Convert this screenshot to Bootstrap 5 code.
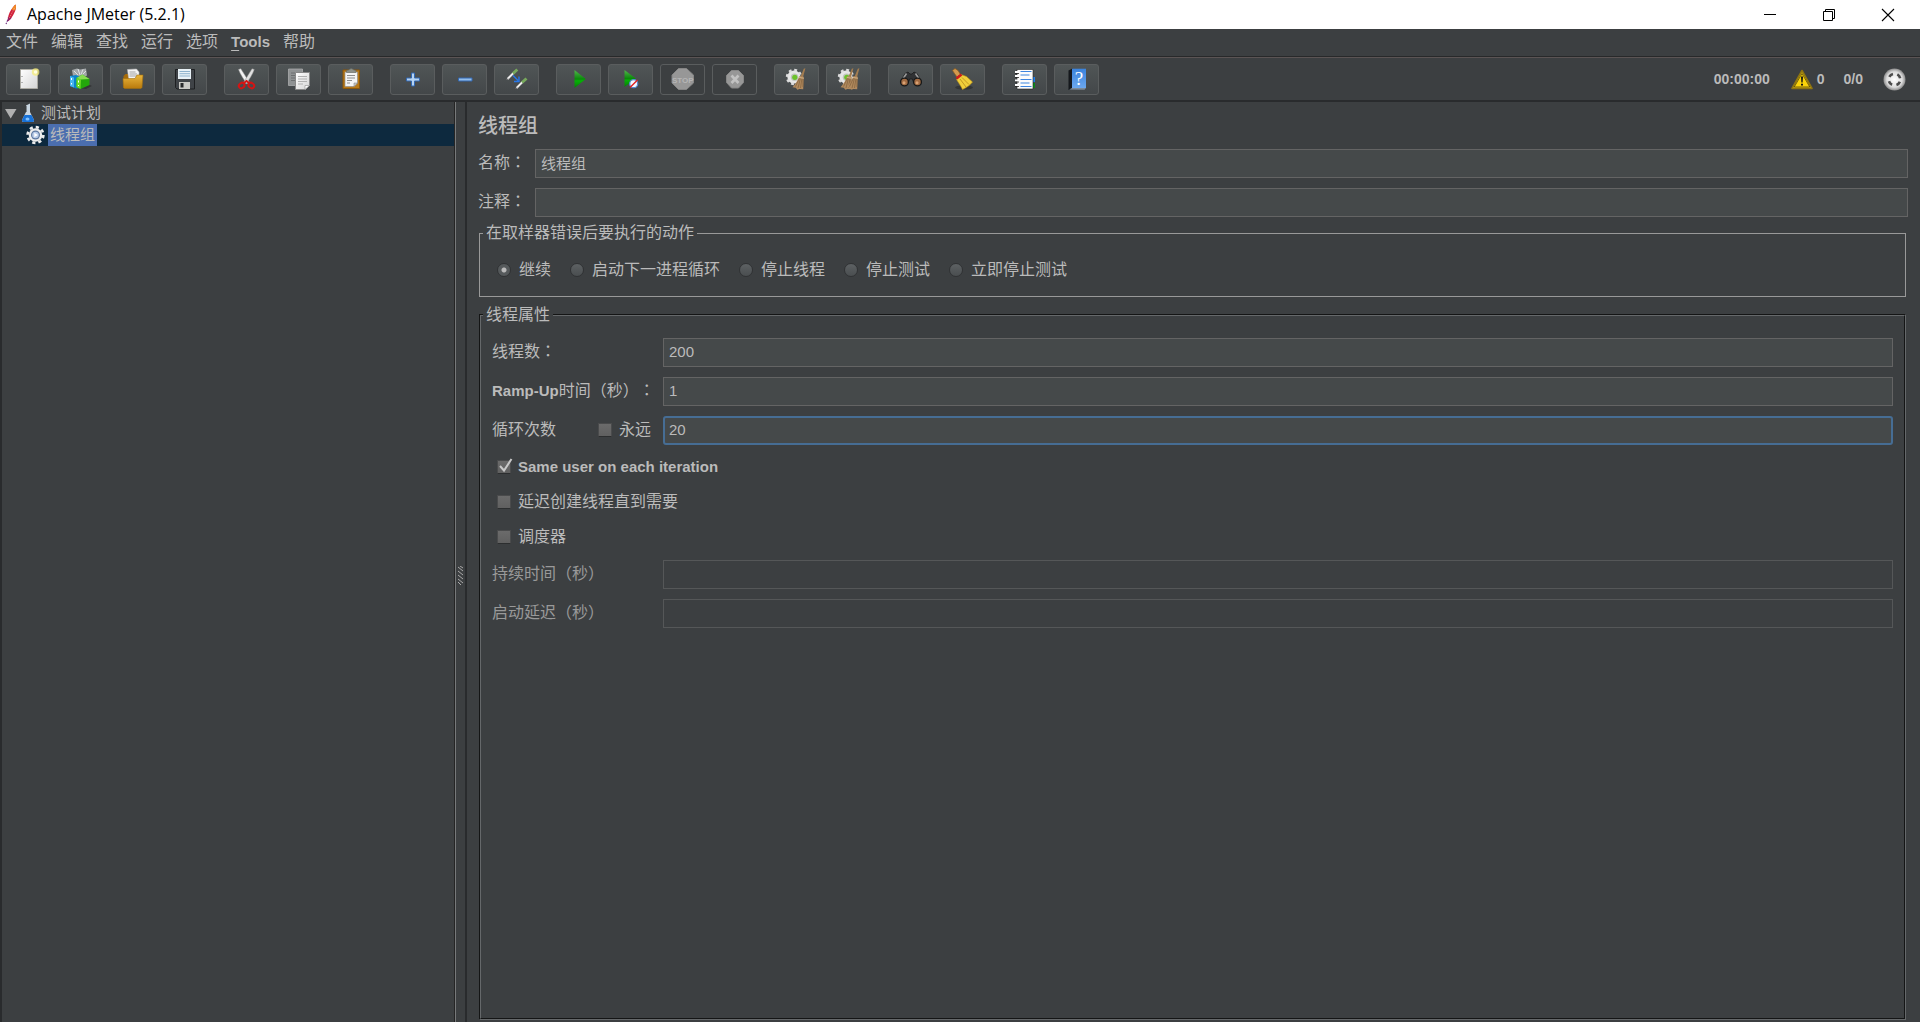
<!DOCTYPE html>
<html lang="zh-CN">
<head>
<meta charset="utf-8">
<meta name="viewport" content="width=device-width, initial-scale=1">
<title>Apache JMeter (5.2.1)</title>
<link rel="stylesheet" href="https://cdn.jsdelivr.net/npm/bootstrap@5.3.0/dist/css/bootstrap.min.css">
<style>
  body { background: #3c3f41; color: #bbb; font-family: "Liberation Sans", "Noto Sans CJK SC", sans-serif; font-size: 16px; line-height: 20px; text-spacing-trim: space-all; }
  .latin { font-size: 15px; font-weight: 700; }
  .colon { font-family: "Noto Sans CJK TC", sans-serif; line-height: 1; }
  .titlebar { background: #fff; color: #000; height: 29px; font: 16px/29px "Open Sans", "Noto Sans", sans-serif; padding: 0 25px 0 4px; }
  .titlebar .appname { margin-left: 9px; }
  .winbtns { gap: 45px; }
  .winbtn { border: 0; background: none; padding: 0; width: 14px; height: 14px; display: block; }
  .winbtn svg, .toolbtn svg, .node svg, .state svg { display: block; }
  .menubar { height: 27px; padding-bottom: 2px; }
  .menubar a { color: #bbb; text-decoration: none; padding: 0 7px 0 6px; }
  .menubar u { text-underline-offset: 3px; }
  .toolbar { border-top: 1px solid #28292a; box-shadow: inset 0 1px #5b5454; border-bottom: 2px solid #292b2d; height: 46px; padding: 7px 14px 0 6px; }
  .toolset { gap: 7px; margin-right: 17px; }
  .toolbtn { width: 45px; height: 31px; padding: 3px 10px; border: 1px solid #5a5d5e; border-radius: 3px; background: linear-gradient(#505556, #434749); }
  .toolbtn:disabled { background: #3c3f41; }
  .state { font: bold 14px/31px "Liberation Sans", sans-serif; height: 31px; }
  .warnicon { margin: 0 4px 0 21px; }
  .threads { margin: 0 20px 0 19px; }
  .workspace { min-height: 0; }
  .sidebar { width: 456px; border: solid #292b2d; border-width: 0 0 0 2px; border-right: 2px groove #77797a; padding: 0; }
  .node { height: 22px; font-size: 15px; line-height: 22px; }
  .arrow { margin-left: 3px; }
  .flask { margin: 0 6px 0 4px; }
  .cog { margin-left: 24px; }
  .node-picked { background: #0d293e; }
  .node-picked span { background: #4b6eaf; padding: 0 2px; margin-left: 3px; }
  .splitter { width: 9px; padding-top: 26px; }
  .editor { border-left: 2px solid #292b2d; padding: 12px 12px 2px 11px; min-width: 0; }
  .editor h1 { font-size: 20px; line-height: 24px; font-weight: 500; margin: 0 0 11px; }
  .formrow { margin-bottom: 10px; height: 29px; }
  .namelabel, .proplabel { padding-bottom: 2px; }
  .namelabel { width: 57px; }
  .proplabel { width: 171px; }
  .forever { margin-right: 12px; }
  .field { flex: 1; min-width: 0; height: 29px; border: 1px solid #646464; border-radius: 0; background: #45494a; color: #bbb; font-size: 15px; line-height: 20px; padding: 0 5px 2px; outline: 0; }
  .field:disabled { background: #3c3f41; border-color: #555758; }
  .field-active { border: 2px solid #466d94; border-radius: 3px; padding: 0 4px 2px; }
  .dimmed { color: #999; }
  fieldset.actions { border: 1px solid #999; padding: 17px 3px 16px; margin: -4px 2px 0 1px; }
  fieldset.props { border: 2px groove #65686a; padding: 13px 11px 0; margin: 8px 2px 0 1px; }
  .boxtitle { float: none; width: auto; font-size: 16px; line-height: 20px; padding: 0 3px; margin: 0; }
  .props .boxtitle { margin-left: -9px; }
  .radiorow { padding-left: 14px; gap: 19px; }
  .pick { gap: 7px; }
  .radiorow .pick { gap: 8px; }
  .pick input { appearance: none; margin: 0; flex: none; }
  .pick input[type=radio] { width: 14px; height: 14px; border-radius: 50%; border: 1px solid #303234; background: linear-gradient(#5d6163, #4a4e50); }
  .pick input[type=radio]:checked { background: radial-gradient(circle, #bbb 0 2px, #55595b 3px); }
  .pick input[type=checkbox] { width: 14px; height: 14px; border: 1px solid #4a4b4c; border-bottom-color: #2c2e2f; background: linear-gradient(#6b6b6b, #606060); }
  .checks { padding: 0 0 6px 5px; }
  .checkrow { height: 35px; }
  .tick { position: relative; }
  .tick svg { position: absolute; left: 0; top: 1px; pointer-events: none; }
</style>
<script src="https://cdn.jsdelivr.net/npm/bootstrap@5.3.0/dist/js/bootstrap.bundle.min.js"></script>
</head>
<body class="d-flex flex-column vh-100 overflow-hidden">
<svg width="0" height="0" class="position-absolute" aria-hidden="true">
  <defs>
    <linearGradient id="gPaper" x2="1" y2="1"><stop stop-color="#fff"/><stop offset="1" stop-color="#d4d4d4"/></linearGradient>
    <linearGradient id="gGold" x2="0" y2="1"><stop stop-color="#e9b53c"/><stop offset="1" stop-color="#b97a0c"/></linearGradient>
    <linearGradient id="gGreen" x2="0" y2="1"><stop stop-color="#52b64c"/><stop offset=".5" stop-color="#0b8a0b"/><stop offset=".6" stop-color="#06b206"/><stop offset="1" stop-color="#087c08"/></linearGradient>
    <radialGradient id="gBall"><stop stop-color="#fff"/><stop offset=".7" stop-color="#ddd"/><stop offset="1" stop-color="#8c8c8c"/></radialGradient>
    <linearGradient id="gBlue" x2="0" y2="1"><stop stop-color="#3b83dc"/><stop offset="1" stop-color="#6ba7ee"/></linearGradient>
    <g id="gear">
      <circle cx="9" cy="9" r="6.6" fill="#e6e6e6"/>
      <circle cx="9" cy="9" r="7" fill="none" stroke="#dcdcdc" stroke-width="2.4" stroke-dasharray="2.8 2.7"/>
      <circle cx="9.6" cy="9.3" r="3.8" fill="#bfc4bb"/><circle cx="9.8" cy="9.3" r="2.6" fill="#6cc22b"/>
    </g>
    <g id="besom">
      <path d="M18.800 .8l1.600-.5-2.400 9-2.400-.8z" fill="#a27c50"/>
      <path d="M14.500 8l4.300 .8-.6 12.500-3.800-.3-2 .8-1.600-2-3.300-.6C10.500 16 12.800 12.500 14.500 8z" fill="#b1895d"/>
      <path d="M14.500 10l-4 8.500M15.500 10l-2.500 10M17 10l-1.500 10M18 10v9" stroke="#80603c" stroke-width=".7" fill="none"/>
      <path d="M13.800 9.500l5 .8" stroke="#d8b98c" stroke-width=".9"/>
    </g>
  </defs>
</svg>

<header class="titlebar d-flex align-items-center">
  <svg width="14" height="22" viewBox="0 0 14 22" aria-hidden="true">
    <path d="M11.500 .5c1 2 .5 5-1.500 9-1.500 3-3.500 5.500-6 7.500C3.500 13 5 9 7 6c1.400-2.200 3-4.200 4.500-5.500z" fill="#d0213c"/>
    <path d="M11.500 .5c1 2 .5 3.800-.5 6L7.500 5.400C9 3 10.400 1.500 11.500 .5z" fill="#f08a24"/>
    <path d="M3.800 13.200l4.100.2C6.800 15 5.500 16.200 4 17.200z" fill="#9c2261"/>
    <path d="M10.500 4L5 14.500" stroke="#f6b0a0" stroke-width=".7" stroke-dasharray="1 1"/>
    <path d="M4 15.500L2 20" stroke="#6c2a7a" stroke-width="1.100" stroke-dasharray="2.500 1"/>
  </svg>
  <span class="appname">Apache JMeter (5.2.1)</span>
  <div class="winbtns d-flex ms-auto">
    <button class="winbtn" type="button" aria-label="最小化"><svg width="14" height="14"><path d="M1 6.500h12" stroke="#000"/></svg></button>
    <button class="winbtn" type="button" aria-label="还原"><svg width="14" height="14"><path d="M1.500 3.500h9v9h-9zM3.500 3.500v-2h9v9h-2" fill="none" stroke="#000"/></svg></button>
    <button class="winbtn" type="button" aria-label="关闭"><svg width="14" height="14"><path d="M1 1l12 12M13 1L1 13" stroke="#000" stroke-width="1.100"/></svg></button>
  </div>
</header>

<nav class="menubar d-flex align-items-center">
  <a href="#">文件</a><a href="#">编辑</a><a href="#">查找</a><a href="#">运行</a><a href="#">选项</a><a href="#" class="latin"><u>T</u>ools</a><a href="#">帮助</a>
</nav>

<div class="toolbar d-flex align-items-start" role="toolbar">
  <div class="toolset d-flex">
    <button class="toolbtn" type="button" aria-label="新建"><svg width="23" height="23"><path d="M3.500 1.500h17v19h-17z" fill="url(#gPaper)" stroke="#aaa9a2"/><path d="M5 8v1M5 14v1" stroke="#777"/><circle cx="18.600" cy="4" r="3.800" fill="#f5ec7a" opacity=".75"/><circle cx="18.600" cy="4" r="1.800" fill="#fffde0"/></svg></button>
    <button class="toolbtn" type="button" aria-label="模板"><svg width="23" height="23"><path d="M3 2l5-1.500 3 1 6-1 1 7-6 3-8-2z" fill="#a4a8aa"/><path d="M5 3l4 4M9 1l2 6M14 1.500l-2 5M17 3l-4 4" stroke="#dfe2e4"/><path d="M1 8l6-1 5 2v11l-5 .5-6-2.500z" fill="#0b83cc"/><path d="M1 8l4 1.500v10L1 18z" fill="#45b4ee"/><path d="M2.500 10v2M2.500 15v1.500" stroke="#fff"/><path d="M19 16l4 2-6 3-7-1z" fill="#222" opacity=".5"/><path d="M7.500 10l6-3.500 7 4.500v6l-9 4-4-2z" fill="#23a70b"/><path d="M7.500 10l4.500 1.500-.5 9.500-4-2z" fill="#6bdc24"/><path d="M12 11.500l8.500-.5-7-4.500-6 3.500z" fill="#87dd52"/><path d="M9.500 12.500v2M9.500 17v1" stroke="#fff"/></svg></button>
    <button class="toolbtn" type="button" aria-label="打开"><svg width="23" height="23"><path d="M2.500 8l2-2h5l1.500 2h10v12h-18.500z" fill="#a66b0a"/><path d="M6.500 1.500l9-.5 2.500 3v9h-10z" fill="#f4f4f4" stroke="#bbb" stroke-width=".6"/><path d="M8.500 4h6M8.500 6h7.500M8.500 8h7.500" stroke="#999" stroke-width=".9"/><path d="M2 10.500h12l2-3.500h6l-1 12.500-1 1H3.500l-1-1z" fill="url(#gGold)" stroke="#a2700f" stroke-width=".6"/></svg></button>
    <button class="toolbtn" type="button" aria-label="保存"><svg width="23" height="23"><path d="M2.500 1.500h19v19.500H4L2.500 19.500z" fill="#3f4347" stroke="#1e2022"/><path d="M5 1h13v10H5z" fill="#e8f1f6"/><path d="M6.500 3.500h10.500M6.500 5.700h10.500M6.500 8h10.500" stroke="#8eb2cd"/><path d="M6 14h11v7H6z" fill="#c9c9c5"/><path d="M7.500 15h3v4.500h-3z" fill="#27292a"/></svg></button>
  </div>
  <div class="toolset d-flex">
    <button class="toolbtn" type="button" aria-label="剪切"><svg width="23" height="23"><path d="M3.500 1.500l2.300-.8L14.300 14.200l-2.600 1.500C8.500 11 5.500 6.500 3.500 1.500z" fill="#f2f2f2" stroke="#9a9a9a" stroke-width=".5"/><path d="M19.300 1.500L17 .7 8.700 14.200l2.600 1.500C14.500 11 17.500 6.500 19.300 1.500z" fill="#e0e0e0" stroke="#8c8c8c" stroke-width=".5"/><ellipse cx="6.700" cy="17.500" rx="3" ry="2.500" transform="rotate(-35 6.700 17.500)" fill="none" stroke="#d41414" stroke-width="2"/><ellipse cx="16.300" cy="17.500" rx="3" ry="2.500" transform="rotate(35 16.300 17.500)" fill="none" stroke="#d41414" stroke-width="2"/><path d="M8.500 15.300l3-2.300 3 2.300" fill="none" stroke="#d41414" stroke-width="2"/></svg></button>
    <button class="toolbtn" type="button" aria-label="复制"><svg width="23" height="23"><path d="M1.500 1h14v16.500h-14z" fill="#8f9293" stroke="#a9abac" stroke-width=".8"/><path d="M4 5h9M4 7.500h5M4 10h5M4 12.500h5" stroke="#6c6f70"/><path d="M8.500 4.500h14v13l-4 4h-10z" fill="url(#gPaper)" stroke="#888"/><path d="M11 8.500h9M11 11h9M11 13.500h9M11 16h5" stroke="#b0b0b0"/><path d="M18 21.500v-4h4.500z" fill="#fff" stroke="#999" stroke-width=".7"/></svg></button>
    <button class="toolbtn" type="button" aria-label="粘贴"><svg width="23" height="23"><path d="M4 2h16.500v18.500H4z" fill="#b87918" stroke="#8b570b"/><path d="M6 4h12.500v11l-3.500 3.500H6z" fill="#f3f3f3" stroke="#888" stroke-width=".6"/><path d="M8 7.500h8M8 10h8M8 12.500h5M8 15h3" stroke="#8c8c8c"/><path d="M15 18.500V15h3.500z" fill="#ccc" stroke="#777" stroke-width=".5"/><path d="M7.500 4.500v-2l2-.5q2.700-3 5.500 0l2 .5v2z" fill="#8d9089" stroke="#666961" stroke-width=".6"/></svg></button>
  </div>
  <div class="toolset d-flex">
    <button class="toolbtn" type="button" aria-label="全部展开"><svg width="23" height="23"><path d="M10.500 5h3v5h5v3h-5v5h-3v-5h-5v-3h5z" fill="#b5d3f3" stroke="#3368b2"/></svg></button>
    <button class="toolbtn" type="button" aria-label="全部折叠"><svg width="23" height="23"><path d="M5.500 10h13.500v3H5.500z" fill="#93bdea" stroke="#3368b2"/></svg></button>
    <button class="toolbtn" type="button" aria-label="切换"><svg width="23" height="23"><path d="M2.500 11l6-6M11.500 20l6-6" stroke="#eee" stroke-width="2"/><path d="M8 5.500L12.300 1.500M17 14.500l4.500-4" stroke="#78a95c" stroke-width="3"/><path d="M1.500 12l1.500-1.500M10.500 21l1.500-1.500" stroke="#777"/><path d="M8 7.500l5 5M14 8.500v5H9" fill="none" stroke="#2877e8" stroke-width="1.400"/></svg></button>
  </div>
  <div class="toolset d-flex">
    <button class="toolbtn" type="button" aria-label="启动"><svg width="23" height="23"><path d="M7.500 2l11.300 9L7.500 20z" fill="url(#gGreen)"/></svg></button>
    <button class="toolbtn" type="button" aria-label="不停顿开始"><svg width="23" height="23"><path d="M5.500 2l11.300 8.500L5.500 19z" fill="url(#gGreen)"/><circle cx="14.700" cy="15.700" r="4" fill="#f4f8ff" stroke="#568bd0" stroke-width="1.300"/><path d="M11 19.500l7.500-7.500" stroke="#df2222" stroke-width="1.400"/></svg></button>
    <button class="toolbtn" type="button" aria-label="停止" disabled><svg width="23" height="23"><path d="M7.500 .5h8L22.500 7v8l-7 6.500h-8L1 15V7z" fill="#979797" stroke="#858585"/><text x="11.700" y="14.500" text-anchor="middle" font-family="Liberation Sans, sans-serif" font-size="8" font-weight="700" fill="#b5b5b5">STOP</text></svg></button>
    <button class="toolbtn" type="button" aria-label="关闭线程" disabled><svg width="23" height="23"><path d="M8.500 2.500h7l5 5v7l-5 5.500h-7l-5-5.500v-7z" fill="#979797" stroke="#868686"/><path d="M8.500 7.500l7 7.500M15.500 7.500l-7 7.500" stroke="#c2c2c2" stroke-width="2.600"/></svg></button>
  </div>
  <div class="toolset d-flex">
    <button class="toolbtn" type="button" aria-label="清除"><svg width="23" height="23"><use href="#gear"/><use href="#besom"/></svg></button>
    <button class="toolbtn" type="button" aria-label="清除全部"><svg width="23" height="23"><use href="#gear"/><use href="#besom" x="-4"/><use href="#besom" x="2"/></svg></button>
  </div>
  <div class="toolset d-flex">
    <button class="toolbtn" type="button" aria-label="查找"><svg width="23" height="23"><path d="M6 5.500l3-1.500 2 2h2l2-2 3 1.500 4.500 8-3.500 3-5-3-.5-2.500h-3L10 13.500l-5 3-3.500-3z" fill="#303234" stroke="#111" stroke-width=".6"/><path d="M7.500 5.500l-4 6M16.500 5.500l4 6" stroke="#999" stroke-width="1.600"/><circle cx="5.500" cy="14" r="3.900" fill="#a06a42" stroke="#17191a" stroke-width="1.400"/><circle cx="18.500" cy="14" r="3.900" fill="#a06a42" stroke="#17191a" stroke-width="1.400"/><circle cx="5" cy="14.700" r="1.500" fill="#d9a274"/><circle cx="18" cy="14.700" r="1.500" fill="#d9a274"/></svg></button>
    <button class="toolbtn" type="button" aria-label="重置查找"><svg width="23" height="23"><ellipse cx="13" cy="19.500" rx="9" ry="2" fill="#222" opacity=".5"/><path d="M1.500 2.500l2.500-2 3 2 2.500 4L6 9 3.500 5.500z" fill="#d29a4e" stroke="#8d5c1d" stroke-width=".7"/><path d="M10 6.500l5.500 2L21.500 14c-2.500 3.500-6 5.500-10 7.500C10 18 7.500 15 5.500 11.500z" fill="#f0cf3b" stroke="#b98f16" stroke-width=".6"/><path d="M11 9.500l7 7M9 11l6 8" stroke="#b5891b" stroke-width=".8"/><path d="M5.500 10.500l5-4" stroke="#cf1c1c" stroke-width="2.600"/></svg></button>
  </div>
  <div class="toolset d-flex">
    <button class="toolbtn" type="button" aria-label="函数助手"><svg width="23" height="23"><path d="M19 9h3v5h-3z" fill="#1f7eea"/><path d="M19 15h3v5h-3z" fill="#0b8a1a"/><path d="M4 1.500h16V21H4z" fill="#fbfbfb" stroke="#222" stroke-width=".6"/><path d="M7.500 3.500h11M7.500 7h9M7.500 11.500h11M7.500 15h9M7.500 18.500h11" stroke="#3d85e0" stroke-width="1.200"/><path d="M2 4h4M2 8h4M2 12.500h4M2 17h4" stroke="#fff" stroke-width="1.800"/><path d="M2 5.500h4M2 9.500h4M2 14h4M2 18.500h4" stroke="#222" stroke-width=".8"/></svg></button>
    <button class="toolbtn" type="button" aria-label="帮助"><svg width="23" height="23"><path d="M3.500 2.500l4-2V20l-3 2h-1z" fill="#15181c"/><path d="M7 .7h14V20H7z" fill="url(#gBlue)"/><path d="M4 21.500L7 20h14l-1.500 1.700z" fill="#7d8a98"/><text x="14" y="17" text-anchor="middle" font-family="Liberation Serif, serif" font-size="19" fill="#fff">?</text></svg></button>
  </div>
  <div class="state d-flex align-items-center ms-auto">
    <span>00:00:00</span>
    <svg class="warnicon" width="22" height="21" viewBox="0 0 22 21" role="img" aria-label="警告"><path d="M11 1.500L21 19.500H1z" fill="#f7cf13" stroke="#8f7510" stroke-width="1.600" stroke-linejoin="round"/><path d="M11 4.500L18.800 18H3.200z" fill="#fbd40a" stroke="#51420b" stroke-width=".8"/><path d="M10 7.500h2l-.4 6h-1.200zM10 14.700h2v1.800h-2z" fill="#111"/></svg>
    <span>0</span><span class="threads">0/0</span>
    <svg width="23" height="23" viewBox="0 0 23 23" role="img" aria-label="运行状态"><circle cx="11.500" cy="11.500" r="11" fill="url(#gBall)"/><circle cx="11.500" cy="11.500" r="5.800" fill="none" stroke="#4c4c4c" stroke-width="2.600" stroke-dasharray="4.555 4.555" stroke-dashoffset="-2.280"/></svg>
  </div>
</div>

<div class="workspace d-flex flex-grow-1">
  <aside class="sidebar flex-shrink-0">
    <div class="node d-flex align-items-center">
      <svg class="arrow" width="12" height="11" aria-hidden="true"><path d="M0 1h11.500L5.700 10.500z" fill="#b0b0b0"/></svg>
      <svg class="flask" width="14" height="20" aria-hidden="true"><path d="M5 4V2.500l4-2V9l4 8q.5 2-1.500 2H2.500q-2 0-1.500-2L5 9z" fill="#c9d6e2"/><path d="M3.500 12h7l2.500 5q.5 2-1.500 2H2.500q-2 0-1.500-2z" fill="#1872d8"/><path d="M5.500 3v6" stroke="#7e858b"/><ellipse cx="6.500" cy="16" rx="2" ry="1.500" fill="#7fc0ff"/></svg>
      <span>测试计划</span>
    </div>
    <div class="node node-picked d-flex align-items-center">
      <svg class="cog" width="19" height="20" viewBox="0 0 19 20" aria-hidden="true"><circle cx="9.500" cy="10" r="7.900" fill="none" stroke="#ececec" stroke-width="2.600" stroke-dasharray="3.200 3.005"/><circle cx="9.500" cy="10" r="6.800" fill="#ededed"/><circle cx="9.500" cy="10" r="4.500" fill="#5d779f"/><circle cx="9.500" cy="10" r="3.300" fill="#b8cbe8"/><path d="M8.300 7.800l3.500 2.200-3.500 2.200z" fill="#fff"/></svg>
      <span>线程组</span>
    </div>
  </aside>
  <div class="splitter d-flex align-items-center justify-content-center flex-shrink-0">
    <svg width="5" height="19" aria-hidden="true"><path d="M0 1l5 4M0 5l5 4M0 9l5 4M0 13l5 4M2 0l3 2M0 16l3 3" stroke="#aaa"/></svg>
  </div>
  <main class="editor d-flex flex-column flex-grow-1">
    <h1>线程组</h1>
    <div class="formrow d-flex align-items-center"><label class="namelabel" for="tgName">名称<span class="colon" lang="zh-TW">：</span></label><input class="field" id="tgName" type="text" value="线程组"></div>
    <div class="formrow d-flex align-items-center"><label class="namelabel" for="tgNote">注释<span class="colon" lang="zh-TW">：</span></label><input class="field" id="tgNote" type="text"></div>

    <fieldset class="actions">
      <legend class="boxtitle">在取样器错误后要执行的动作</legend>
      <div class="radiorow d-flex flex-wrap">
        <label class="pick d-flex align-items-center"><input type="radio" name="onerr" checked>继续</label>
        <label class="pick d-flex align-items-center"><input type="radio" name="onerr">启动下一进程循环</label>
        <label class="pick d-flex align-items-center"><input type="radio" name="onerr">停止线程</label>
        <label class="pick d-flex align-items-center"><input type="radio" name="onerr">停止测试</label>
        <label class="pick d-flex align-items-center"><input type="radio" name="onerr">立即停止测试</label>
      </div>
    </fieldset>

    <fieldset class="props flex-grow-1">
      <legend class="boxtitle">线程属性</legend>
      <div class="formrow d-flex align-items-center"><label class="proplabel" for="threads">线程数<span class="colon" lang="zh-TW">：</span></label><input class="field" id="threads" type="text" value="200"></div>
      <div class="formrow d-flex align-items-center"><label class="proplabel" for="ramp"><span class="latin">Ramp-Up</span>时间（秒）<span class="colon" lang="zh-TW">：</span></label><input class="field" id="ramp" type="text" value="1"></div>
      <div class="formrow d-flex align-items-center mb-1">
        <div class="proplabel d-flex justify-content-between"><label for="loops">循环次数</label><label class="pick forever d-flex align-items-center"><input type="checkbox">永远</label></div>
        <input class="field field-active" id="loops" type="text" value="20">
      </div>
      <div class="checks">
        <div class="checkrow d-flex"><label class="pick tick d-flex align-items-center latin"><input type="checkbox" checked>Same user on each iteration<svg width="16" height="30" aria-hidden="true"><path d="M3 16l4 4.500L14.500 9" fill="none" stroke="#c8c8c8" stroke-width="2"/></svg></label></div>
        <div class="checkrow d-flex"><label class="pick d-flex align-items-center"><input type="checkbox">延迟创建线程直到需要</label></div>
        <div class="checkrow d-flex"><label class="pick d-flex align-items-center"><input type="checkbox">调度器</label></div>
      </div>
      <div class="formrow d-flex align-items-center dimmed"><label class="proplabel" for="dur">持续时间（秒）</label><input class="field" id="dur" type="text" disabled></div>
      <div class="formrow d-flex align-items-center dimmed"><label class="proplabel" for="delay">启动延迟（秒）</label><input class="field" id="delay" type="text" disabled></div>
    </fieldset>
  </main>
</div>
</body>
</html>
